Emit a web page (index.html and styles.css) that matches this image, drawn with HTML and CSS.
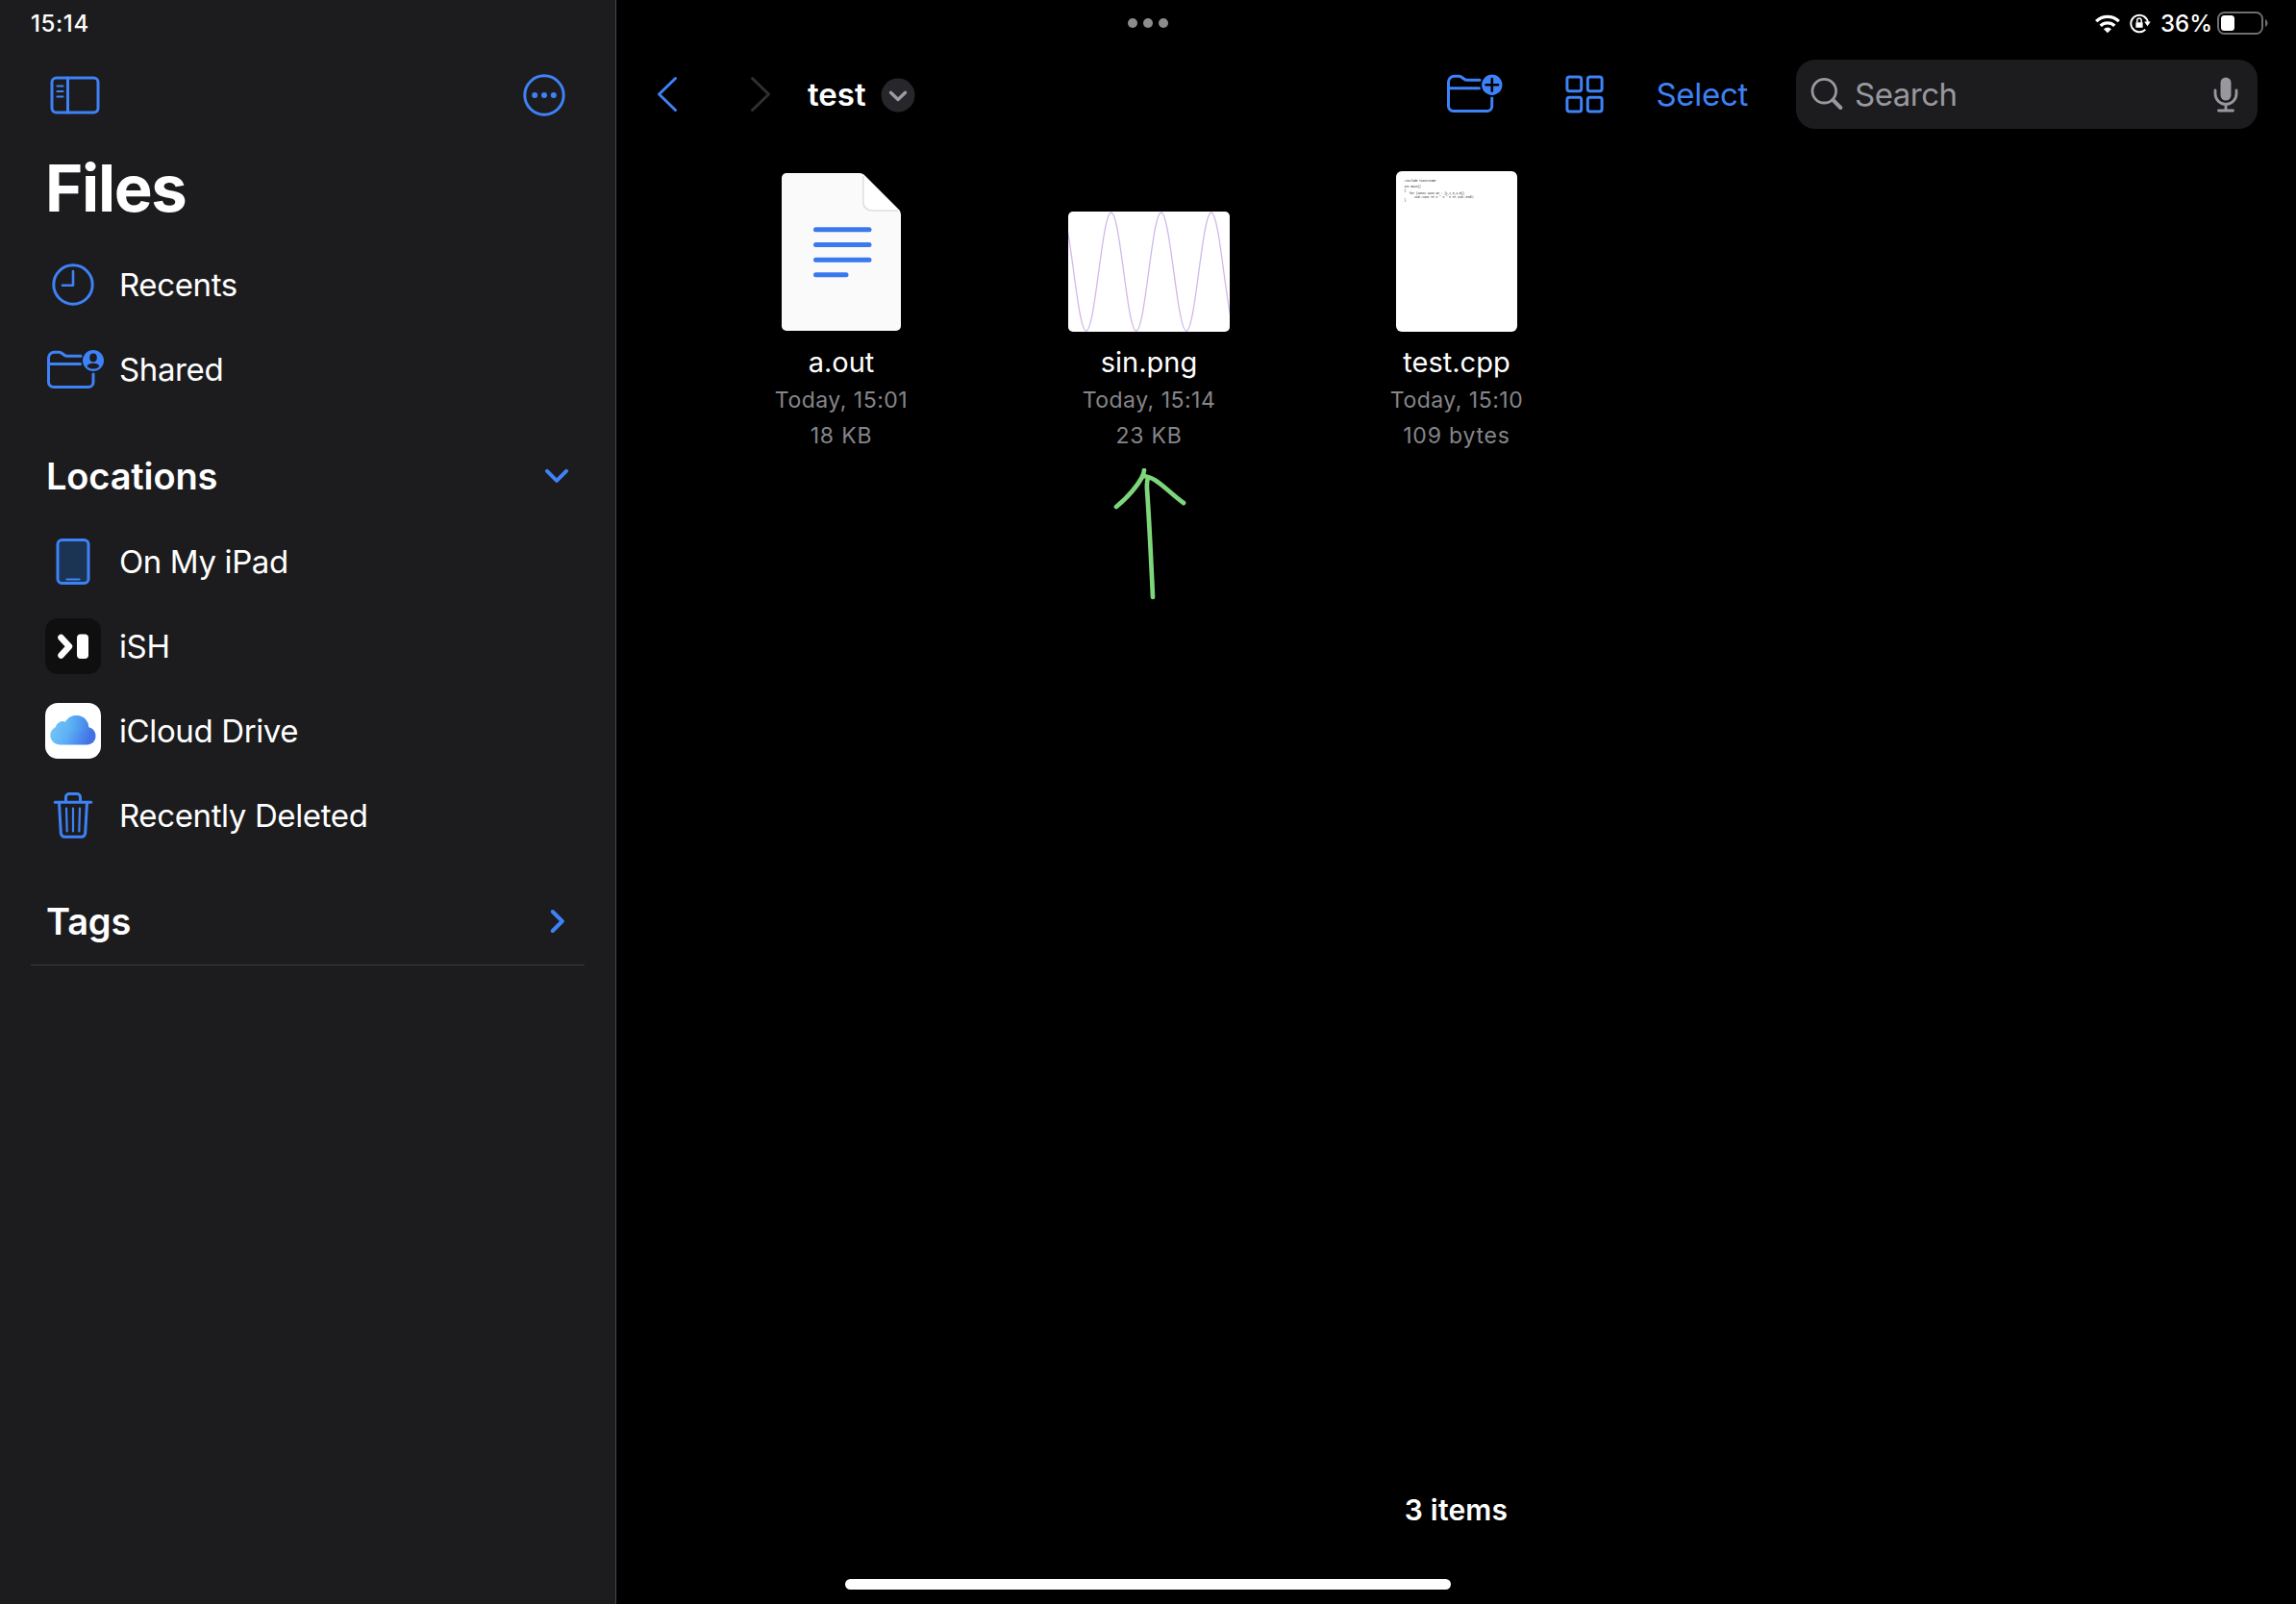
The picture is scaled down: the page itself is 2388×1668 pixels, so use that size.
FILE: index.html
```html
<!DOCTYPE html>
<html lang="en">
<head>
<meta charset="utf-8">
<title>Files</title>
<link rel="stylesheet" href="styles.css">
</head>
<body>
<aside class="sidebar">
  <div class="status status-left"><span class="clock">15:14</span></div>
  <div class="side-tools">
    <svg class="icon" width="52" height="40" viewBox="0 0 52 40"><rect x="2" y="2" width="48" height="36" rx="4.5"/><path d="M18.500 2v36"/><path class="thin" d="M7.500 10.500h6M7.500 16h6M7.500 21.500h6"/></svg>
    <svg class="icon" width="44" height="44" viewBox="0 0 44 44"><circle cx="22" cy="22" r="20.200"/><g class="solid"><circle cx="12.200" cy="22" r="3"/><circle cx="22" cy="22" r="3"/><circle cx="31.800" cy="22" r="3"/></g></svg>
  </div>
  <h1 class="title">Files</h1>
  <nav class="list">
    <div class="row"><span class="slot"><svg class="icon" width="44" height="44" viewBox="0 0 44 44"><circle cx="22" cy="22" r="20.200"/><path class="hand" d="M22 8v14.800H11"/></svg></span><span>Recents</span></div>
    <div class="row"><span class="slot"><svg class="icon shared" width="60" height="44" viewBox="0 0 60 44"><path d="M36 8.200H21.500c-3.500 0-4.500-3.900-8-3.900H8.500a6 6 0 0 0-6 6v25.200a5 5 0 0 0 5 5H44a5 5 0 0 0 5-5V27M2.500 16.500H35.500"/><circle class="solid" cx="49" cy="13" r="11"/><g class="cut"><ellipse cx="49" cy="10" rx="3.800" ry="4.400"/><path d="M42.500 19c1.500-4.400 11.500-4.400 13 0-3 3.400-10 3.400-13 0z"/></g></svg></span><span>Shared</span></div>
  </nav>
  <h2 class="group locations"><span>Locations</span><svg class="icon bold" width="26" height="16" viewBox="0 0 26 16"><path d="M3 2.800l10 10 10-10"/></svg></h2>
  <nav class="list">
    <div class="row"><span class="slot"><svg class="icon" width="38" height="50" viewBox="0 0 38 50"><rect class="screen" x="3" y="2.500" width="32" height="45" rx="4.500"/><path class="thin" d="M12.500 43.500h13"/></svg></span><span>On My iPad</span></div>
    <div class="row"><span class="slot app ish"><svg width="58" height="58" viewBox="0 0 58 58"><path class="prompt" d="M16.500 20l8.500 9.300-8.500 9.200"/><rect x="33" y="16.500" width="12" height="25.500" rx="4" fill="#fff"/></svg></span><span>iSH</span></div>
    <div class="row"><span class="slot app cloud"><svg width="58" height="58" viewBox="0 0 58 58"><defs><linearGradient id="sky" x1="0" y1="0" x2="1" y2=".25"><stop offset="0" stop-color="#79cdf4"/><stop offset=".5" stop-color="#5db0f7"/><stop offset="1" stop-color="#4272e6"/></linearGradient><linearGradient id="puff" x1="0" y1="0" x2="1" y2="0"><stop offset="0" stop-color="#65bdf1"/><stop offset="1" stop-color="#3f88ea"/></linearGradient></defs><path fill="url(#sky)" d="M15 43.500a9.800 9.800 0 0 1-4.200-18.600 7.600 7.600 0 0 1 10.200-5.200c2.400-4.200 6.700-6.700 11.300-6.700 7.300 0 12.700 5.500 13 12.300 4.200 1 7.200 4.500 7.200 8.900 0 5.300-4 9.300-9.300 9.300z"/><path fill="url(#puff)" opacity=".65" d="M21 19.700c2.400-4.200 6.700-6.700 11.300-6.700 7.300 0 12.700 5.500 13 12.300-4 5-18 6-23 3.500-1.500-3-2-6-1.300-9.100z"/></svg></span><span>iCloud Drive</span></div>
    <div class="row"><span class="slot"><svg class="icon" width="44" height="50" viewBox="0 0 44 50"><path d="M3.200 11.200h37.600M14.500 11V6a3.500 3.500 0 0 1 3.500-3.500h8a3.500 3.500 0 0 1 3.500 3.500v5M7.500 11.500l1.800 31.800a4 4 0 0 0 4 3.900h17.400a4 4 0 0 0 4-3.900l1.800-31.800"/><path class="thin" d="M15 17.500l.7 24M22 17.500v24M29 17.500l-.7 24"/></svg></span><span>Recently Deleted</span></div>
  </nav>
  <h2 class="group tags"><span>Tags</span><svg class="icon bold" width="16" height="26" viewBox="0 0 16 26"><path d="M2.800 3l10 10-10 10"/></svg></h2>
  <hr class="rule">
</aside>
<main class="main">
  <div class="status status-right">
    <span class="dots"><i></i><i></i><i></i></span>
    <div class="indicators">
      <svg class="wifi" width="28" height="21" viewBox="0 0 28 21"><path d="M2.200 8.100a17 17 0 0 1 23.600 0M6.700 12.800a10.600 10.600 0 0 1 14.600 0"/><path class="fan" d="M14 20.300l-4-4.100a5.800 5.800 0 0 1 8 0z"/></svg>
      <svg class="lock" width="22" height="22" viewBox="0 0 22 22"><path d="M16.300 17.800a8.800 8.800 0 1 1 2.600-7"/><path class="fill" d="M15.200 9.500h6.600l-3.300 4.800zM6.400 10.200h7.200v5.600H6.400z"/><path class="shackle" d="M7.800 10.500V8.200a2.200 2.200 0 0 1 4.400 0v2.300"/></svg>
      <span class="percent">36%</span>
      <svg class="battery" width="54" height="26" viewBox="0 0 54 26"><rect class="shell" x="2" y="2" width="46" height="22" rx="6.500"/><rect x="5" y="5" width="14" height="16" rx="3.500" fill="#fff"/><path d="M51 9c3.300 1.500 3.300 6.500 0 8z" fill="#6e6e6e"/></svg>
    </div>
  </div>
  <header class="toolbar">
    <svg class="icon back" width="24" height="40" viewBox="0 0 24 40"><path d="M20.500 3.500L3.500 20l17 16.500"/></svg>
    <svg class="icon forward" width="24" height="40" viewBox="0 0 24 40"><path d="M3.500 3.500l17 16.500-17 16.500"/></svg>
    <span class="crumb">test</span>
    <svg class="more" width="36" height="36" viewBox="0 0 36 36"><circle cx="18" cy="18" r="17.500"/><path d="M10.500 15.200l7.500 7.300 7.500-7.300"/></svg>
    <svg class="icon new-folder" width="60" height="44" viewBox="0 0 60 44"><path d="M35 8.200H21.500c-3.500 0-4.500-3.900-8-3.900H8.500a6 6 0 0 0-6 6v25.200a5 5 0 0 0 5 5H42.700a5 5 0 0 0 5-5V27M2.500 16.700H34.500"/><circle class="solid" cx="47.800" cy="13.300" r="10.700"/><path class="plus" d="M47.800 7v12.600M41.500 13.300h12.600"/></svg>
    <svg class="icon grid" width="40" height="40" viewBox="0 0 40 40"><rect x="1.900" y="1.900" width="14.800" height="14.800" rx="2.500"/><rect x="23.300" y="1.900" width="14.800" height="14.800" rx="2.500"/><rect x="1.900" y="23.300" width="14.800" height="14.800" rx="2.500"/><rect x="23.300" y="23.300" width="14.800" height="14.800" rx="2.500"/></svg>
    <span class="select">Select</span>
    <div class="search">
      <svg width="34" height="36" viewBox="0 0 34 36"><circle cx="14.300" cy="14.700" r="12.300"/><path class="handle" d="M23.500 24l7.800 8"/></svg>
      <span class="hint">Search</span>
      <svg width="26" height="38" viewBox="0 0 26 38"><rect class="capsule" x="7.500" y="1.500" width="11" height="24" rx="5.500"/><path class="stand" d="M2 15v3.500a11 11 0 0 0 22 0V15M13 29.500V36M5.500 36h15"/></svg>
    </div>
  </header>
  <section class="files">
    <article class="file">
      <div class="thumb"><svg class="document" width="124" height="164" viewBox="0 0 124 164"><path fill="#fafafa" d="M5 0h76q3 0 5 2l36 36q2 2 2 5v116a5 5 0 0 1-5 5H5a5 5 0 0 1-5-5V5a5 5 0 0 1 5-5z"/><path fill="#fff" d="M84.800 1.500V30a9 9 0 0 0 9 9H122z"/><path class="fold" d="M84.800 3V30a9 9 0 0 0 9 9H121"/><path class="lines" d="M35.500 58.800h55.500M35.500 74.500h55.500M35.500 90.200h55.500M35.500 105.700h31.500"/></svg></div>
      <div class="name">a.out</div>
      <div class="meta">Today, 15:01</div>
      <div class="meta size">18 KB</div>
    </article>
    <article class="file">
      <div class="thumb"><svg class="plot" width="168" height="125" viewBox="0 0 168 125"><path d="M-7.300 1C2.170 1 9.230 124 18.700 124S35.230 1 44.700 1s16.530 123 26 123S87.230 1 96.700 1s16.700 123 26.200 123S139.300 1 148.800 1s16.500 123 26 123"/></svg></div>
      <div class="name">sin.png</div>
      <div class="meta">Today, 15:14</div>
      <div class="meta size">23 KB</div>
      <svg class="arrow" width="84" height="144" viewBox="0 0 84 144"><path d="M45 134C43 90 41 50 39 22q-.5-8 1-12M7 40C19 30 29 18 34 9q1.500-3 2-7M34 8c14 0 24 14 43 28"/></svg>
    </article>
    <article class="file">
      <div class="thumb"><pre class="code">#include &lt;iostream&gt;

int main()
{
   for (const auto &amp;n : {1,2,3,4,5})
      std::cout &lt;&lt; n * n * n &lt;&lt; std::endl;
}</pre></div>
      <div class="name">test.cpp</div>
      <div class="meta">Today, 15:10</div>
      <div class="meta size">109 bytes</div>
    </article>
  </section>
  <footer class="summary">3 items</footer>
</main>
<div class="home-bar"></div>
</body>
</html>
```

FILE: styles.css
```css
* { box-sizing: border-box; }

body {
  margin: 0;
  width: 2388px;
  height: 1668px;
  display: flex;
  overflow: hidden;
  background: #000;
  color: #fff;
  font-family: Inter, "Liberation Sans", sans-serif;
  font-size: 33px;
}

svg { display: block; flex: none; }

.icon {
  fill: none;
  stroke: #3e82f7;
  stroke-width: 3;
  stroke-linecap: round;
  stroke-linejoin: round;
}
.icon .thin { stroke-width: 2.2; }
.icon .hand { stroke-width: 2.6; }
.icon .solid { fill: #3e82f7; stroke: none; }
.icon .cut { fill: #1c1c1e; stroke: none; }
.icon .plus { stroke: #000; stroke-width: 2.6; }
.icon .screen { fill: #1c3454; }
.icon.bold { stroke-width: 4; }
.icon.shared { margin-left: 4px; }

/* Sidebar */
.sidebar {
  width: 641px;
  flex: none;
  display: flex;
  flex-direction: column;
  background: #1c1c1e;
  border-right: 1px solid #464648;
}
.status {
  height: 48px;
  display: flex;
  align-items: center;
  flex: none;
}
.status-left { padding-left: 32px; }
.clock, .percent { font-size: 24px; font-weight: 500; }
.clock { letter-spacing: 0.6px; }
.side-tools {
  height: 101px;
  padding: 0 52px;
  display: flex;
  align-items: center;
  justify-content: space-between;
}
.title {
  margin: 0;
  padding-left: 47px;
  height: 103px;
  line-height: 94px;
  font-size: 67px;
  font-weight: 700;
  letter-spacing: -1.3px;
}
.list { display: flex; flex-direction: column; letter-spacing: -0.38px; }
.list .row {
  height: 88px;
  padding-left: 47px;
  display: flex;
  align-items: center;
  gap: 19px;
}
.slot {
  width: 58px;
  height: 58px;
  display: flex;
  align-items: center;
  justify-content: center;
}
.app { border-radius: 13px; overflow: hidden; }
.ish { background: #0f0f0f; }
.cloud { background: #fff; }
.prompt {
  fill: none;
  stroke: #fff;
  stroke-width: 6.5;
  stroke-linecap: round;
  stroke-linejoin: round;
}
.group {
  margin: 0;
  padding: 0 48px;
  display: flex;
  align-items: center;
  justify-content: space-between;
  font-size: 38px;
  font-weight: 600;
  letter-spacing: -0.15px;
  height: 88px;
}
.locations { margin-top: 22px; height: 90px; }
.tags { margin-top: 22px; margin-bottom: 1px; padding-right: 52px; }
.rule {
  margin: 0 32px;
  border: 0;
  height: 1px;
  background: #3c3c3f;
}

/* Content pane */
.main {
  flex: 1;
  display: flex;
  flex-direction: column;
}
.status-right {
  padding: 0 29px 0 532px;
  justify-content: space-between;
}
.dots { display: flex; gap: 6px; }
.dots i { width: 10px; height: 10px; border-radius: 50%; background: #8c8c8c; }
.indicators { display: flex; align-items: center; }
.wifi { margin-right: 9px; fill: none; stroke: #fff; stroke-width: 3.4; }
.wifi .fan { fill: #fff; stroke: none; }
.lock { margin-right: 10px; fill: none; stroke: #fff; stroke-width: 2; }
.lock .fill { fill: #fff; stroke: none; }
.lock .shackle { stroke-width: 1.5; }
.percent { margin-right: 4px; }
.battery .shell { fill: none; stroke: #6e6e6e; stroke-width: 2; }

.toolbar {
  height: 100px;
  padding: 0 40px 0 41px;
  display: flex;
  align-items: center;
}
.forward { margin-left: 73px; stroke: #303032; }
.crumb { margin-left: 37px; font-weight: 600; }
.more { margin: 1px 0 0 15px; fill: #27272b; }
.more path {
  fill: none;
  stroke: #9b9ba2;
  stroke-width: 3.4;
  stroke-linecap: round;
  stroke-linejoin: round;
}
.new-folder { margin-left: auto; margin-bottom: 2px; }
.grid { margin-left: 64px; }
.select { margin: 0 50px 0 55px; color: #3e82f7; letter-spacing: -0.3px; }
.search {
  width: 480px;
  height: 72px;
  padding: 0 20px 0 15px;
  display: flex;
  align-items: center;
  border-radius: 20px;
  background: #1c1c1e;
  color: #98989f;
}
.search svg {
  fill: none;
  stroke: #98989f;
  stroke-width: 2.8;
  stroke-linecap: round;
}
.search .handle { stroke-width: 4; }
.search .capsule { fill: #98989f; stroke: none; }
.hint { flex: 1; margin-left: 12px; letter-spacing: -0.5px; }

.files {
  flex: 1;
  padding: 30px 0 0 74px;
  display: flex;
  align-items: flex-start;
}
.file {
  width: 320px;
  display: flex;
  flex-direction: column;
  align-items: center;
  position: relative;
}
.thumb {
  height: 167px;
  display: flex;
  align-items: flex-end;
}
.document { margin-bottom: 1px; }
.fold { fill: none; stroke: #dedede; stroke-width: 1.5; }
.lines { fill: none; stroke: #3a78ee; stroke-width: 5; stroke-linecap: round; }
.plot {
  border-radius: 5px;
  background: #fff;
  fill: none;
  stroke: #d0b8e6;
  stroke-width: 1.3;
}
.code {
  margin: 0;
  width: 126px;
  height: 167px;
  padding: 8.5px;
  border-radius: 6px;
  background: #fff;
  color: #000;
  font: 2.9px/3.4px "Liberation Mono", monospace;
}
.name { margin-top: 10px; height: 43px; line-height: 43px; font-size: 29px; }
.meta {
  height: 37px;
  line-height: 37px;
  font-size: 23px;
  letter-spacing: 0.5px;
  color: #85858a;
}
.meta.size { letter-spacing: 0.8px; }
.arrow {
  position: absolute;
  left: 119px;
  top: 309px;
  fill: none;
  stroke: #7ed67a;
  stroke-width: 4.7;
  stroke-linecap: round;
  stroke-linejoin: round;
}
.summary {
  height: 98px;
  margin-bottom: 49px;
  line-height: 98px;
  text-align: center;
  font-size: 30px;
  font-weight: 600;
  letter-spacing: 0.2px;
}
.home-bar {
  position: absolute;
  left: 879px;
  top: 1642px;
  width: 630px;
  height: 11px;
  border-radius: 6px;
  background: #fff;
}
```
